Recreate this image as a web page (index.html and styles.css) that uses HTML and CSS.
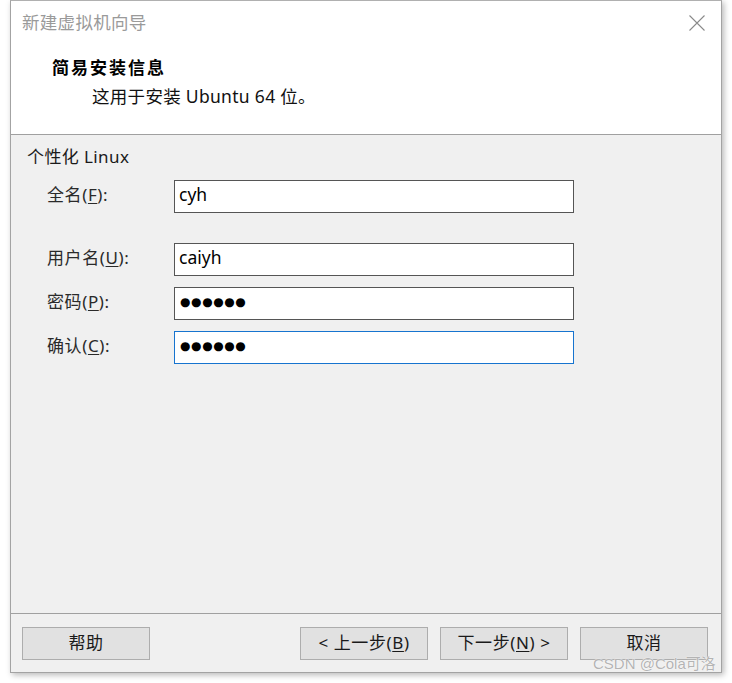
FILE: index.html
```html
<!DOCTYPE html>
<html lang="zh-CN">
<head>
<meta charset="utf-8">
<title>新建虚拟机向导</title>
<link rel="stylesheet" href="styles.css">
</head>
<body>
<div class="window">
  <div class="header">
    <div class="titlebar">
      <span class="title">新建虚拟机向导</span>
      <svg class="close" width="16" height="16" viewBox="0 0 16 16"><path d="M0.5 0.5 L15.5 15.5 M15.5 0.5 L0.5 15.5" stroke="#8a8a8a" stroke-width="1.1" fill="none"/></svg>
    </div>
    <div class="heading">简易安装信息</div>
    <div class="subheading">这用于安装 Ubuntu 64 位。</div>
  </div>
  <div class="content">
    <div class="group">个性化 Linux</div>
    <div class="form">
      <label class="label">全名(<u>F</u>):</label>
      <div class="field">cyh</div>
      <div class="spacer"></div>
      <label class="label">用户名(<u>U</u>):</label>
      <div class="field">caiyh</div>
      <label class="label">密码(<u>P</u>):</label>
      <div class="field dots">●●●●●●</div>
      <label class="label">确认(<u>C</u>):</label>
      <div class="field dots focused">●●●●●●</div>
    </div>
  </div>
  <div class="footer">
    <button class="btn">帮助</button>
    <div class="grow"></div>
    <button class="btn">&lt; 上一步(<u>B</u>)</button>
    <button class="btn">下一步(<u>N</u>) &gt;</button>
    <button class="btn">取消</button>
  </div>
</div>
<div class="watermark">CSDN @Cola可洛</div>
</body>
</html>
```
FILE: styles.css
```css
html, body {
  margin: 0;
  padding: 0;
  background: #ffffff;
}
body {
  font-family: "Noto Sans", "Noto Sans CJK SC", sans-serif;
  color: #1a1a1a;
  width: 732px;
  height: 683px;
  position: relative;
  overflow: hidden;
}
.window {
  margin-left: 10px;
  width: 712px;
  height: 673px;
  box-sizing: border-box;
  border: 1px solid #a3a3a3;
  border-top-color: #b0b0b0;
  display: flex;
  flex-direction: column;
  box-shadow: 2px 2px 6px rgba(0, 0, 0, 0.28);
  background: #f0f0f0;
}
.header {
  height: 133px;
  background: #ffffff;
  border-bottom: 1px solid #a0a0a0;
  flex: none;
}
.titlebar {
  height: 42px;
  display: flex;
  align-items: center;
  justify-content: space-between;
  padding: 0 16px 0 11px;
}
.title {
  font-family: "Noto Sans CJK SC", sans-serif;
  font-size: 17.5px;
  color: #9a9a9a;
  line-height: 24px;
  letter-spacing: 0.3px;
}
.close {
  display: block;
  margin-top: 1px;
}
.heading {
  margin-top: 12px;
  padding-left: 41px;
  font-family: "Noto Sans CJK SC", sans-serif;
  font-weight: 700;
  font-size: 17px;
  line-height: 24px;
  color: #000;
  letter-spacing: 2px;
}
.subheading {
  margin-top: 5px;
  padding-left: 81px;
  font-size: 17.5px;
  line-height: 24px;
  color: #111;
  letter-spacing: 0.3px;
}
.content {
  flex: 1;
  padding: 10px 0 0 16px;
}
.group {
  font-size: 17px;
  line-height: 24px;
  color: #1a1a1a;
  letter-spacing: 0.4px;
}
.form {
  margin-top: 11px;
  margin-left: 20px;
  display: grid;
  grid-template-columns: 127px 400px;
  grid-template-rows: 33px 8px 33px 33px 33px;
  row-gap: 11px;
  align-items: center;
}
.spacer {
  grid-column: 1 / span 2;
  height: 8px;
}
.label {
  font-size: 17px;
  line-height: 24px;
  color: #2a2a2a;
  letter-spacing: 0.6px;
  padding-bottom: 3px;
}
.label u, .btn u {
  text-underline-offset: 2px;
}
.field {
  height: 33px;
  box-sizing: border-box;
  border: 1px solid #555555;
  background: #ffffff;
  padding-left: 4px;
  font-size: 17.5px;
  line-height: 27px;
  color: #000;
}
.field.focused {
  border-color: #1774cf;
}
.dots {
  font-family: "DejaVu Sans", sans-serif;
  font-size: 12px;
  line-height: 29px;
  letter-spacing: 0.6px;
  padding-left: 5px;
}
.footer {
  flex: none;
  height: 59px;
  border-top: 1px solid #a0a0a0;
  display: flex;
  align-items: flex-start;
  gap: 12px;
  padding: 13px 13px 0 11px;
  box-sizing: border-box;
}
.grow {
  flex: 1;
}
.btn {
  width: 128px;
  height: 33px;
  box-sizing: border-box;
  background: #e1e1e1;
  border: 1px solid #adadad;
  border-radius: 0;
  font-family: "Noto Sans", "Noto Sans CJK SC", sans-serif;
  font-size: 17px;
  letter-spacing: 0.6px;
  color: #1a1a1a;
  padding: 0 0 2px;
  margin: 0;
  line-height: 24px;
}
.watermark {
  position: absolute;
  left: 593px;
  top: 654px;
  font-family: "Liberation Sans", "Noto Sans CJK SC", sans-serif;
  font-size: 15px;
  line-height: 20px;
  color: #b4b4b4;
  text-shadow: 0 0 1px #fff, 0 0 1px #fff;
}
```
